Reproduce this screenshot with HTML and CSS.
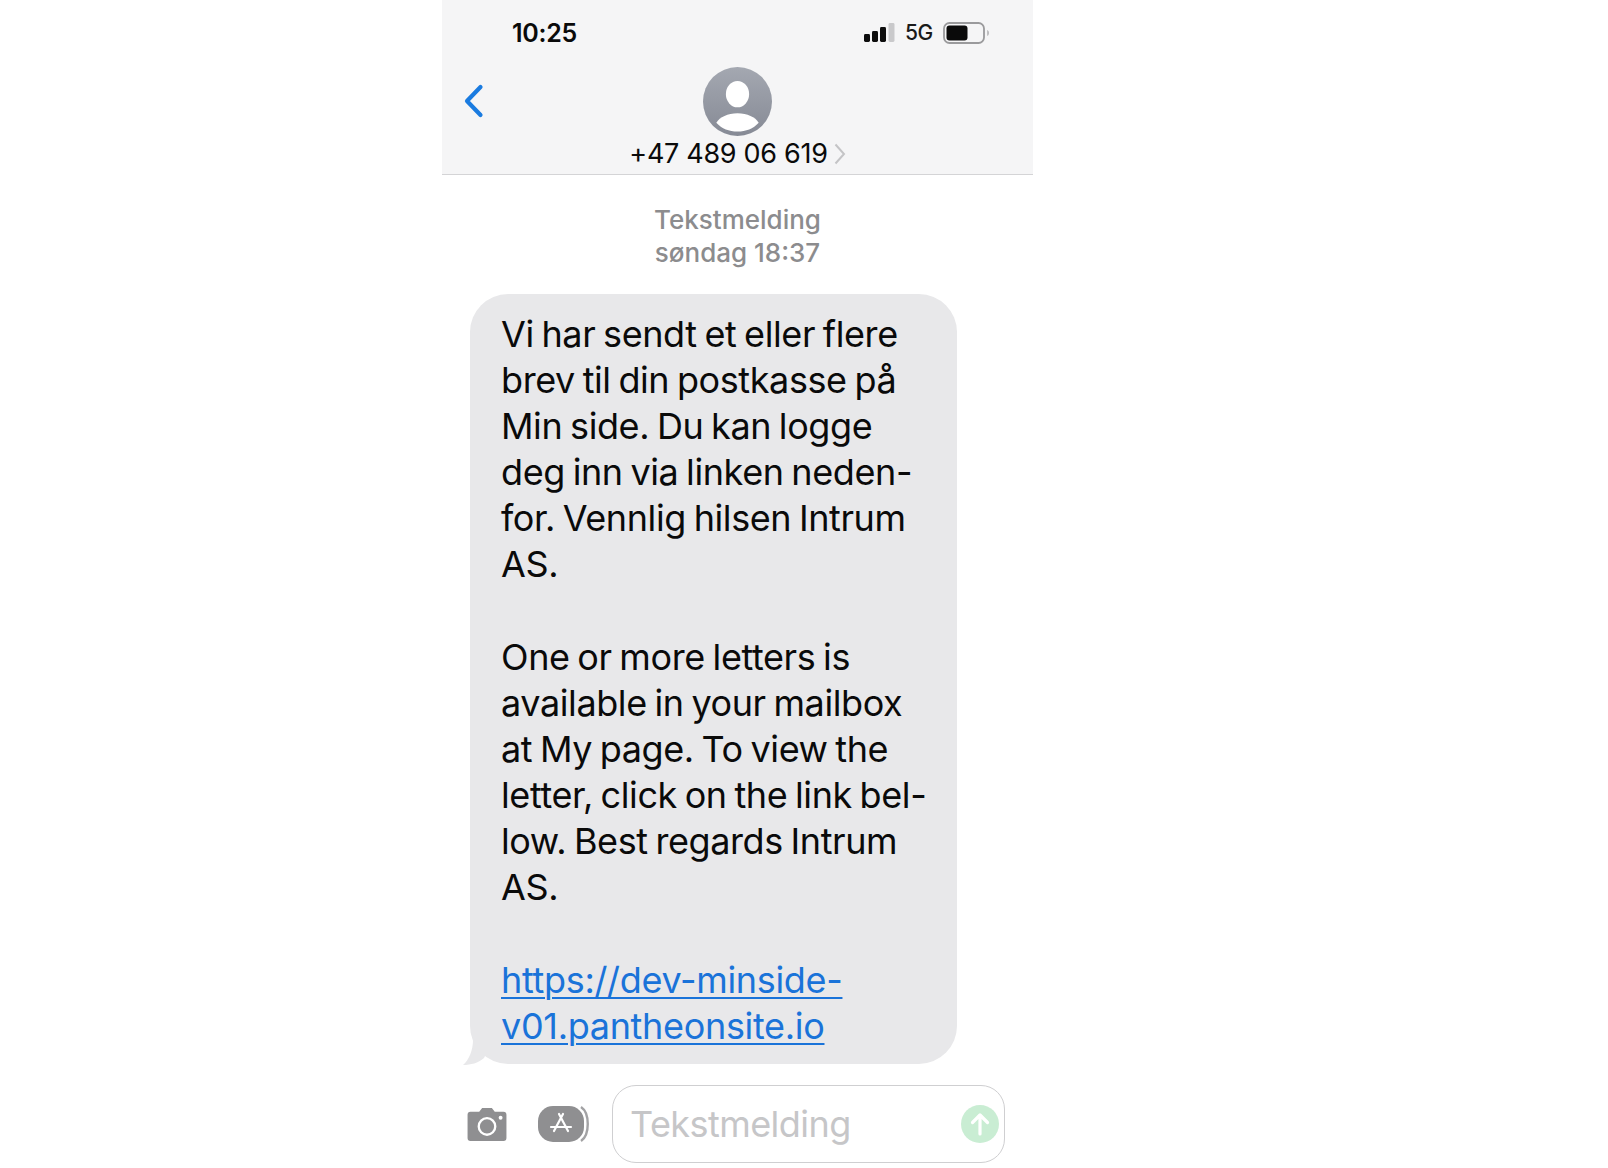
FILE: index.html
```html
<!DOCTYPE html>
<html lang="no">
<head>
<meta charset="utf-8">
<title>Tekstmelding</title>
<link rel="stylesheet" href="styles.css">
</head>
<body>
<main class="phone">
  <header class="top">
    <div class="status">
      <span class="time">10:25</span>
      <div class="status-right">
        <svg class="signal" width="31" height="20" viewBox="0 0 31 20"><rect x="0" y="11" width="6" height="8" rx="1.400" fill="#0d0d0d"/><rect x="8" y="8" width="6" height="11" rx="1.400" fill="#0d0d0d"/><rect x="16" y="4" width="6" height="15" rx="1.400" fill="#0d0d0d"/><rect x="24.500" y="0" width="6" height="19" rx="1.400" fill="#c9c9cb"/></svg>
        <span class="net">5G</span>
        <svg class="battery" width="47" height="22" viewBox="0 0 47 22"><rect x="1" y="1" width="40" height="20" rx="5.500" fill="none" stroke="#9a9a9c" stroke-width="1.800"/><rect x="3.500" y="3.500" width="21" height="15" rx="3" fill="#0a0a0a"/><path d="M44.500 8c1.400.6 1.400 5.400 0 6z" fill="#8e8e90"/></svg>
      </div>
    </div>
    <div class="nav">
      <svg class="back" width="20" height="34" viewBox="0 0 20 34"><path d="M16.500 3 3 17l13.500 14" fill="none" stroke="#1a7be0" stroke-width="4.200" stroke-linecap="round" stroke-linejoin="round"/></svg>
      <svg class="avatar" width="69" height="69" viewBox="0 0 70 70"><defs><linearGradient id="av" x1="0" y1="0" x2="0" y2="1"><stop offset="0" stop-color="#a4a8b1"/><stop offset="1" stop-color="#868a95"/></linearGradient></defs><circle cx="35" cy="35" r="35" fill="url(#av)"/><ellipse cx="35" cy="27.500" rx="11.800" ry="13.400" fill="#fff"/><path d="M13.500 56.500C17 51 25 47 35 47s18 4 21.500 9.500C51 62.500 43.500 65.500 35 65.500s-16-3-21.500-9z" fill="#fff"/></svg>
    </div>
    <div class="contact">
      <span class="number">+47 489 06 619</span>
      <svg width="12" height="22" viewBox="0 0 12 22"><path d="M1.500 1.500 10 11l-8.500 9.500" fill="none" stroke="#c4c4c6" stroke-width="2"/></svg>
    </div>
  </header>

  <section class="thread">
    <p class="stamp">Tekstmelding<br>søndag 18:37</p>
    <div class="bubble">
      <p>Vi har sendt et eller flere<br>brev til din postkasse på<br>Min side. Du kan logge<br>deg inn via linken neden-<br>for. Vennlig hilsen Intrum<br>AS.</p>
      <p>One or more letters is<br>available in your mailbox<br>at My page. To view the<br>letter, click on the link bel-<br>low. Best regards Intrum<br>AS.</p>
      <p><a href="#">https://dev-minside-<br>v01.pantheonsite.io</a></p>
      <svg class="tail" width="30" height="26" viewBox="0 0 30 26"><path d="M10 0C10 10 6 20 0 25c8 0 15-2 21-7L30 0z" fill="#e8e8ea"/></svg>
    </div>
  </section>

  <footer class="composer">
    <svg class="camera" width="42" height="35" viewBox="0 0 42 36"><path d="M4 5h9l3-4h10l3 4h9a3 3 0 0 1 3 3v24a3 3 0 0 1-3 3H4a3 3 0 0 1-3-3V8a3 3 0 0 1 3-3z" fill="#8f8f91"/><circle cx="21" cy="20" r="8.500" fill="none" stroke="#fff" stroke-width="2.400"/><circle cx="35" cy="11" r="2" fill="#fff"/></svg>
    <svg class="store" width="52" height="36" viewBox="0 0 52 36"><path d="M43 1c9 6 9 28 0 34" fill="none" stroke="#a2a2a4" stroke-width="2.400"/><rect x="0" y="0" width="46" height="36" rx="15" fill="#8f8f91"/><path d="M25 8 16 25M21 8l9 17M13 21h20" fill="none" stroke="#fff" stroke-width="2.200" stroke-linecap="round"/></svg>
    <div class="field">
      <span class="placeholder">Tekstmelding</span>
      <svg class="send" width="38" height="38" viewBox="0 0 38 38"><circle cx="19" cy="19" r="19" fill="#c9edd3"/><path d="M19 29V10M11.500 17.500 19 10l7.500 7.500" fill="none" stroke="#fff" stroke-width="3.200" stroke-linecap="round" stroke-linejoin="round"/></svg>
    </div>
  </footer>
</main>
</body>
</html>
```
FILE: styles.css
```css
* { box-sizing: border-box; }
html, body { margin: 0; padding: 0; background: #fff; }
body { font-family: Inter, "Liberation Sans", sans-serif; color: #0a0a0a; height: 1168px; overflow: hidden; }
p { margin: 0; }
.phone { width: 591px; margin-left: 442px; display: flex; flex-direction: column; }
.top { background: #f5f5f6; border-bottom: 1px solid #d4d4d6; height: 174.500px; display: flex; flex-direction: column; align-items: center; }
.status { width: 100%; height: 66px; padding: 18px 43px 0 70px; display: flex; justify-content: space-between; align-items: flex-start; }
.time { font-size: 25px; font-weight: 600; line-height: 30px; letter-spacing: -0.300px; }
.status-right { display: flex; align-items: center; gap: 10px; height: 30px; }
.net { font-size: 21px; font-weight: 500; line-height: 24px; color: #1a1a1a; letter-spacing: -0.300px; }
.nav { width: 100%; height: 70px; padding-left: 22px; display: grid; grid-template-columns: 20px 1fr 42px; align-items: center; justify-items: center; }
.back { grid-column: 1; grid-row: 1; }
.avatar { grid-column: 2; grid-row: 1; }
.contact { display: flex; align-items: center; gap: 6px; height: 35px; }
.number { font-size: 27px; line-height: 34px; letter-spacing: -0.300px; }
.thread { display: flex; flex-direction: column; padding: 28.500px 0 0 28px; }
.stamp { text-align: center; color: #8c8c8e; font-size: 26px; line-height: 33px; font-weight: 500; margin-left: -28px; }
.bubble { position: relative; margin-top: 25px; background: #e8e8ea; border-radius: 38px; padding: 16.500px 20px 15.500px 31px; font-size: 36px; line-height: 46.150px; letter-spacing: -0.400px; word-spacing: -2px; display: flex; flex-direction: column; gap: 46.150px; width: 487px; }
.bubble a { color: #1a73d9; letter-spacing: -0.320px; text-decoration: underline; text-decoration-thickness: 2px; text-underline-offset: 4px; }
.tail { position: absolute; left: -7px; bottom: -2px; }
.composer { display: flex; align-items: center; margin-top: 21px; padding: 0 28px 0 24px; }
.camera { flex: none; }
.store { flex: none; margin-left: 30px; }
.field { margin-left: 22px; flex: 1; height: 78px; border: 1.500px solid #cfcfd1; border-radius: 24px; background: #fff; display: flex; align-items: center; justify-content: space-between; padding: 0 5px 0 17px; }
.placeholder { font-size: 36px; color: #c6c6c8; letter-spacing: -0.550px; }
```
